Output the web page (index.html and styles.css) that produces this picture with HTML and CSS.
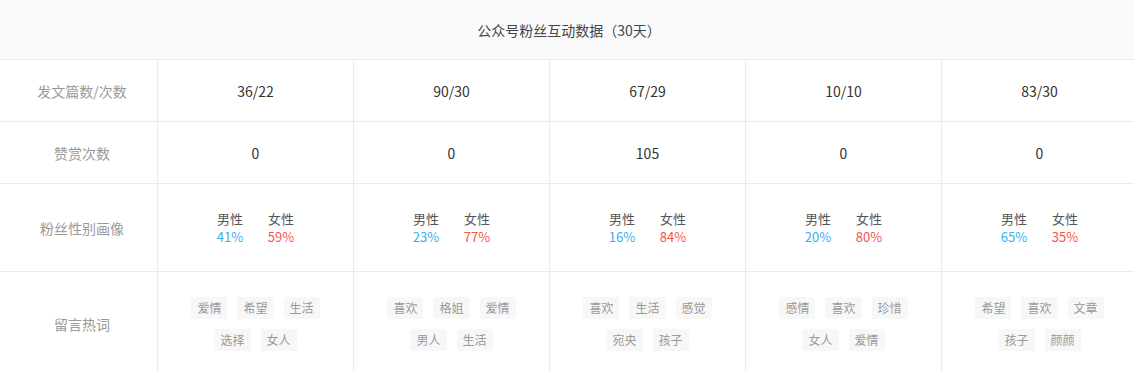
FILE: index.html
```html
<!DOCTYPE html>
<html lang="zh-CN">
<head>
<meta charset="utf-8">
<title>公众号粉丝互动数据</title>
<link rel="stylesheet" href="styles.css">
</head>
<body>
<div class="board">
  <div class="title">公众号粉丝互动数据（30天）</div>

  <div class="label row-a">发文篇数/次数</div>
  <div class="cell row-a">36/22</div>
  <div class="cell row-a">90/30</div>
  <div class="cell row-a">67/29</div>
  <div class="cell row-a">10/10</div>
  <div class="cell row-a">83/30</div>

  <div class="label row-a">赞赏次数</div>
  <div class="cell row-a">0</div>
  <div class="cell row-a">0</div>
  <div class="cell row-a">105</div>
  <div class="cell row-a">0</div>
  <div class="cell row-a">0</div>

  <div class="label row-b">粉丝性别画像</div>
  <div class="cell row-b"><div class="gender"><div class="g"><span class="gl">男性</span><span class="male">41%</span></div><div class="g"><span class="gl">女性</span><span class="female">59%</span></div></div></div>
  <div class="cell row-b"><div class="gender"><div class="g"><span class="gl">男性</span><span class="male">23%</span></div><div class="g"><span class="gl">女性</span><span class="female">77%</span></div></div></div>
  <div class="cell row-b"><div class="gender"><div class="g"><span class="gl">男性</span><span class="male">16%</span></div><div class="g"><span class="gl">女性</span><span class="female">84%</span></div></div></div>
  <div class="cell row-b"><div class="gender"><div class="g"><span class="gl">男性</span><span class="male">20%</span></div><div class="g"><span class="gl">女性</span><span class="female">80%</span></div></div></div>
  <div class="cell row-b"><div class="gender"><div class="g"><span class="gl">男性</span><span class="male">65%</span></div><div class="g"><span class="gl">女性</span><span class="female">35%</span></div></div></div>

  <div class="label row-c">留言热词</div>
  <div class="cell row-c"><div class="tags"><span class="tag">爱情</span><span class="tag">希望</span><span class="tag">生活</span><span class="tag">选择</span><span class="tag">女人</span></div></div>
  <div class="cell row-c"><div class="tags"><span class="tag">喜欢</span><span class="tag">格姐</span><span class="tag">爱情</span><span class="tag">男人</span><span class="tag">生活</span></div></div>
  <div class="cell row-c"><div class="tags"><span class="tag">喜欢</span><span class="tag">生活</span><span class="tag">感觉</span><span class="tag">宛央</span><span class="tag">孩子</span></div></div>
  <div class="cell row-c"><div class="tags"><span class="tag">感情</span><span class="tag">喜欢</span><span class="tag">珍惜</span><span class="tag">女人</span><span class="tag">爱情</span></div></div>
  <div class="cell row-c"><div class="tags"><span class="tag">希望</span><span class="tag">喜欢</span><span class="tag">文章</span><span class="tag">孩子</span><span class="tag">颜颜</span></div></div>
</div>
</body>
</html>
```

FILE: styles.css
```css
html, body {
  margin: 0;
  padding: 0;
  background: #fff;
  overflow: hidden;
}

body {
  font-family: "Noto Sans CJK SC", "Noto Sans", sans-serif;
  color: #333;
}

.board {
  width: 1138px;
  display: grid;
  grid-template-columns: 158px repeat(5, 196px);
}

.title {
  grid-column: 1 / -1;
  height: 59px;
  border-bottom: 1px solid #ebebeb;
  background: #fafafa;
  display: flex;
  align-items: center;
  justify-content: center;
  font-size: 14px;
  color: #444;
}

.label,
.cell {
  border-right: 1px solid #ebebeb;
  border-bottom: 1px solid #ebebeb;
  display: flex;
  align-items: center;
  justify-content: center;
  font-size: 14px;
}

.label {
  color: #999;
  padding-left: 7px;
}

.cell {
  color: #333;
}

.row-a { height: 61px; }
.row-b { height: 87px; }
.row-c { height: 104px; }

.gender {
  display: flex;
  gap: 24px;
  font-size: 13px;
  line-height: 18px;
}

.g {
  display: flex;
  flex-direction: column;
  align-items: center;
  min-width: 27px;
}

.gl { color: #555; }
.male { color: #3ab0f2; }
.female { color: #f5544a; }

.tags {
  padding: 0 30px;
  display: flex;
  flex-wrap: wrap;
  justify-content: center;
  gap: 10px;
}

.tag {
  height: 22px;
  line-height: 22px;
  padding: 0 6px;
  font-size: 12px;
  color: #999;
  background: #f7f7f7;
  border-radius: 2px;
}
```
